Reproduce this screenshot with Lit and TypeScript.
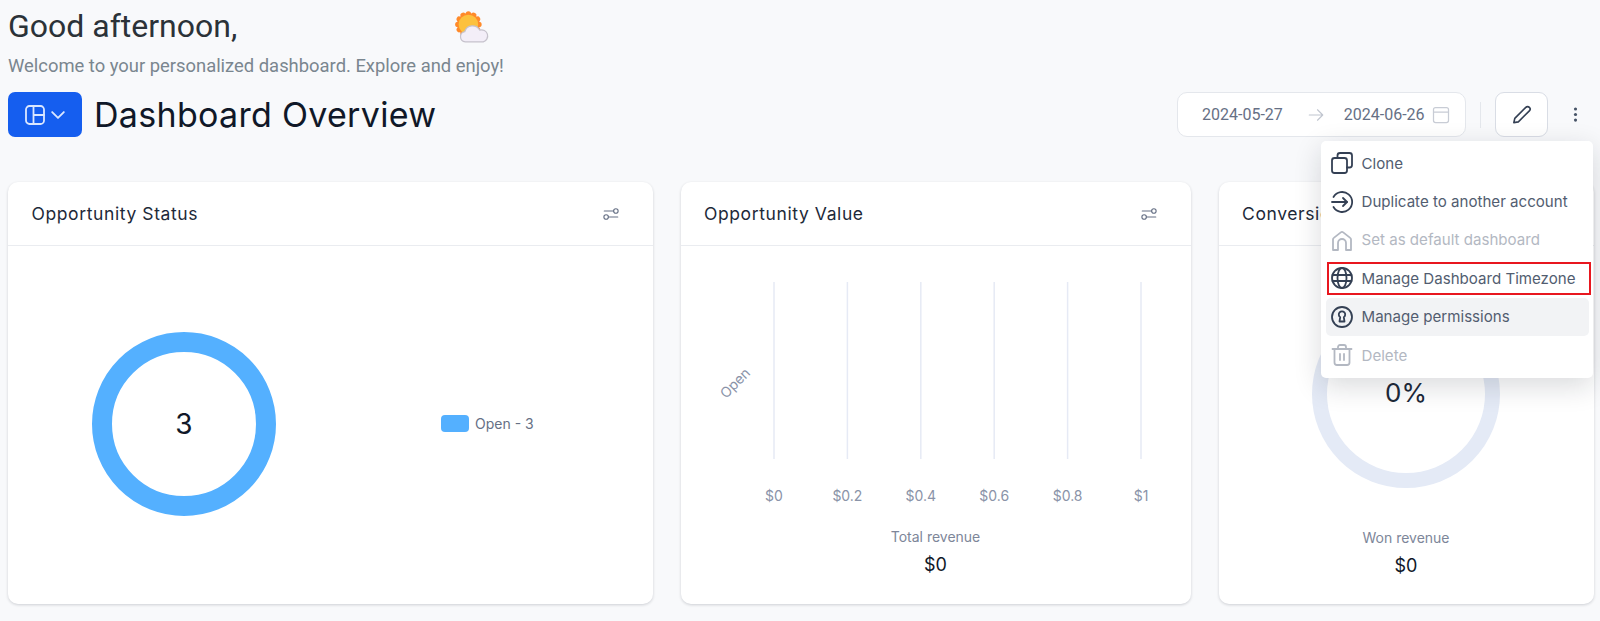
import { LitElement, html, css, svg } from 'lit';
import { customElement } from 'lit/decorators.js';

const icon = (body: unknown, cls = '') => html`
  <svg class=${cls} viewBox="0 0 24 24" fill="none" stroke="currentColor" stroke-width="2" stroke-linecap="round" stroke-linejoin="round">${body}</svg>
`;

const menuItems = [
  {
    label: 'Clone',
    icon: svg`<path d="M7.500 7V4.500A2.500 2.500 0 0 1 10 2h9.500A2.500 2.500 0 0 1 22 4.500V14a2.500 2.500 0 0 1-2.500 2.500H17"/><rect x="2" y="7" width="15" height="15" rx="2.500"/>`,
  },
  {
    label: 'Duplicate to another account',
    icon: svg`<path d="M3.500 7A10 10 0 1 1 3.500 17"/><path d="M2 12h15"/><path d="M13 8l4 4-4 4"/>`,
  },
  {
    label: 'Set as default dashboard',
    disabled: true,
    icon: svg`<path d="M3 22v-10.500a2 2 0 0 1 .8-1.600l7-5.500a2 2 0 0 1 2.400 0l7 5.500a2 2 0 0 1 .8 1.600V22h-5v-7a4 4 0 0 0-8 0v7z"/>`,
  },
  {
    label: 'Manage Dashboard Timezone',
    outlined: true,
    icon: svg`<circle cx="12" cy="12" r="10"/><path d="M2.500 9h19M2.500 15h19"/><ellipse cx="12" cy="12" rx="4.500" ry="10"/>`,
  },
  {
    label: 'Manage permissions',
    hover: true,
    icon: svg`<circle cx="12" cy="12" r="10"/><path d="M9.500 16.500h5l-.7-4.300a3.200 3.200 0 1 0-3.600 0z"/>`,
  },
  {
    label: 'Delete',
    disabled: true,
    icon: svg`<path d="M2.500 6h19M8 6V4a2 2 0 0 1 2-2h4a2 2 0 0 1 2 2v2"/><path d="M4.500 6v13.500A2.500 2.500 0 0 0 7 22h10a2.500 2.500 0 0 0 2.500-2.500V6"/><path d="M10 11v6M14 11v6"/>`,
  },
];

const ticks = ['$0', '$0.2', '$0.4', '$0.6', '$0.8', '$1'];
const sliders = svg`<path d="M3 8h12.500M21 16H8.500"/><circle cx="18.500" cy="8" r="3"/><circle cx="5.500" cy="16" r="3"/>`;

@customElement('app-root')
export class AppRoot extends LitElement {
  static styles = css`
    :host {
      display: block;
      height: 621px;
      background: #f8f9fb;
      font-family: 'Inter', 'Roboto', sans-serif;
      color: #101828;
      overflow: hidden;
    }
    svg { display: block; }
    .page { position: relative; padding: 0 8px; }
    .greeting {
      display: flex;
      align-items: center;
      height: 52px;
      font-family: 'Roboto', sans-serif;
      font-size: 32px;
      color: #2b3238;
    }
    .sun { width: 37px; height: 33px; margin-left: 217px; margin-top: 2px; }
    .welcome {
      font-family: 'Roboto', sans-serif;
      font-size: 18.400px;
      line-height: 28px;
      color: #7a868f;
    }
    .title-row {
      display: flex;
      align-items: center;
      height: 45px;
      margin-top: 12px;
    }
    .board-btn {
      display: flex;
      align-items: center;
      justify-content: center;
      gap: 1px;
      width: 74px;
      height: 45px;
      border-radius: 7px;
      background: #155eef;
      color: #dbe7ff;
    }
    .board-btn svg { width: 24px; height: 24px; stroke-width: 1.800; }
    .board-btn svg.chev { width: 20px; height: 20px; stroke-width: 2.200; }
    h1 {
      margin: 0 0 0 12px;
      font-size: 34px;
      font-weight: 400;
      letter-spacing: 0.3px;
      color: #101828;
    }
    .tools { margin-left: auto; display: flex; align-items: center; }
    .dates {
      display: flex;
      align-items: center;
      width: 289px;
      height: 45px;
      box-sizing: border-box;
      padding: 0 14px 0 24px;
      background: #fff;
      border: 1px solid #e4e7ec;
      border-radius: 10px;
      font-family: 'Roboto', sans-serif;
      font-size: 16px;
      white-space: nowrap;
      color: #667085;
    }
    .dates .arrow { width: 18px; height: 18px; flex: none; margin: 0 19px 0 24px; color: #c0c5cf; stroke-width: 1.500; }
    .dates .cal { width: 20px; height: 20px; flex: none; margin-left: auto; color: #c8ccd5; stroke-width: 1.500; }
    .divider { width: 1px; height: 26px; margin: 0 14px; background: #e4e7ec; }
    .edit {
      display: flex;
      align-items: center;
      justify-content: center;
      width: 53px;
      height: 45px;
      box-sizing: border-box;
      background: #fff;
      border: 1px solid #d9dde5;
      border-radius: 9px;
      color: #344054;
    }
    .edit svg { width: 23px; height: 23px; stroke-width: 1.700; }
    .kebab { width: 19px; height: 19px; margin: 0 7px 0 18px; color: #475467; }

    .cards {
      display: grid;
      grid-template-columns: 644.500px 510px 375px;
      gap: 28px;
      margin-top: 45px;
    }
    .card {
      display: flex;
      flex-direction: column;
      height: 422px;
      background: #fff;
      border-radius: 10px;
      box-shadow: 0 1px 3px rgba(16, 24, 40, 0.18);
    }
    .card-head {
      display: flex;
      align-items: center;
      justify-content: space-between;
      height: 63px;
      flex: none;
      padding: 0 33px 0 23.500px;
      border-bottom: 1px solid #eaecf0;
      font-size: 17.500px;
      letter-spacing: 0.6px;
      color: #1d2939;
    }
    .card-head svg { width: 18px; height: 18px; color: #667085; stroke-width: 1.500; }
    .card-body { flex: 1; display: flex; flex-direction: column; align-items: center; }
    .status-body { flex-direction: row; padding: 0 0 3px 84px; }
    .status-ring { display: grid; place-items: center; width: 184px; height: 184px; }
    .status-ring > * { grid-area: 1 / 1; }
    .status-ring span { font-size: 28px; color: #101828; }
    .legend {
      display: flex;
      align-items: center;
      gap: 6px;
      margin-left: 165px;
      font-size: 14px;
      color: #667085;
    }
    .swatch { width: 28px; height: 17px; border-radius: 4px; background: #54b0ff; }
    .bars { width: 510px; height: 281px; flex: none; }
    .bars text { font-family: 'Inter', sans-serif; font-size: 14px; fill: #8a93a8; }
    .summary { display: flex; flex-direction: column; align-items: center; }
    .summary .label { font-size: 14px; line-height: 20px; color: #7d8699; }
    .summary .value { margin-top: 4.500px; font-size: 18px; line-height: 26px; color: #101828; }
    .won { padding-top: 54px; }
    .won-ring { display: grid; place-items: center; width: 188px; height: 188px; margin-bottom: 40px; }
    .won-ring > * { grid-area: 1 / 1; }
    .won-ring span { padding-bottom: 4px; font-size: 26px; color: #1d2939; }

    .menu {
      position: absolute;
      top: 141px;
      right: 7px;
      width: 272px;
      box-sizing: border-box;
      padding: 3px 4px 4px 5px;
      background: #fff;
      border-radius: 5px;
      box-shadow: 0 8px 28px rgba(16, 24, 40, 0.16);
    }
    .item {
      display: flex;
      align-items: center;
      gap: 7.500px;
      height: 38.400px;
      box-sizing: border-box;
      padding-left: 4px;
      border-radius: 5px;
      font-size: 15.100px;
      color: #525d70;
    }
    .item svg { width: 24px; height: 24px; color: #344054; flex: none; stroke-width: 1.800; }
    .item.disabled { color: #b3b8c2; }
    .item.disabled svg { color: #b3b8c2; }
    .item.hover { background: #f2f3f5; }
    .item.outlined { position: relative; }
    .item.outlined::after {
      content: '';
      position: absolute;
      inset: 3px -2px 3px 1px;
      border: 2px solid #e8171f;
    }
  `;

  private header() {
    return html`
      <div class="greeting">
        Good afternoon,
        <svg class="sun" viewBox="0 0 36 32">
          <g fill="#ff8a2a">
            ${[0, 30, 60, 90, 120, 150, 180, 210, 240, 270, 300, 330].map(
              a => svg`<circle cx="14" cy="13" r="2.600" transform="rotate(${a} 14 13) translate(0 -10.300)"/>`,
            )}
          </g>
          <circle cx="14" cy="13" r="11" fill="#ff8a2a"/>
          <circle cx="14" cy="13" r="9.500" fill="#fcc13d"/>
          <path d="M11 30a5 5 0 0 1-.6-9.900A8 8 0 0 1 25 18.500a5.800 5.800 0 0 1 3.500 11.500z" fill="#f3eef8" stroke="#c6c2cc" stroke-width="1.200"/>
        </svg>
      </div>
      <div class="welcome">Welcome to your personalized dashboard. Explore and enjoy!</div>
      <div class="title-row">
        <div class="board-btn">
          ${icon(svg`<rect x="3" y="3" width="18" height="18" rx="3.500"/><path d="M10.500 3v18M10.500 12H21"/>`)}
          ${icon(svg`<path d="M5 8.500l7 7 7-7"/>`, 'chev')}
        </div>
        <h1>Dashboard Overview</h1>
        <div class="tools">
          <div class="dates">
            <span>2024-05-27</span>
            ${icon(svg`<path d="M3 12h18M14 5l7 7-7 7"/>`, 'arrow')}
            <span>2024-06-26</span>
            ${icon(svg`<rect x="3" y="3" width="18" height="18" rx="2.500"/><path d="M3 8.500h18"/>`, 'cal')}
          </div>
          <div class="divider"></div>
          <div class="edit">
            ${icon(svg`<path d="M4 20.500l1-4.500L16.500 4.500a2.600 2.600 0 0 1 3.700 3.700L8.700 19.700z"/>`)}
          </div>
          <svg class="kebab" viewBox="0 0 24 24" fill="currentColor">
            <circle cx="12" cy="5" r="2"/><circle cx="12" cy="12" r="2"/><circle cx="12" cy="19" r="2"/>
          </svg>
        </div>
      </div>
    `;
  }

  private cardHead(title: string) {
    return html`<div class="card-head"><span>${title}</span>${icon(sliders)}</div>`;
  }

  private barChart() {
    return html`
      <svg class="bars" viewBox="0 0 510 281">
        ${ticks.map((t, i) => {
          const x = 93 + i * 73.400;
          return svg`
            <line x1=${x} x2=${x} y1="36" y2="213" stroke="#e6eaf5" stroke-width="1.500"/>
            <text x=${x} y="255" text-anchor="middle">${t}</text>
          `;
        })}
        <text x="54" y="142" text-anchor="middle" transform="rotate(-45 54 137)">Open</text>
      </svg>
    `;
  }

  render() {
    return html`
      <div class="page">
        ${this.header()}
        <div class="cards">
          <section class="card">
            ${this.cardHead('Opportunity Status')}
            <div class="card-body status-body">
              <div class="status-ring">
                <svg width="184" height="184" viewBox="0 0 184 184">
                  <circle cx="92" cy="92" r="82" fill="none" stroke="#54b0ff" stroke-width="20"/>
                </svg>
                <span>3</span>
              </div>
              <div class="legend"><span class="swatch"></span>Open - 3</div>
            </div>
          </section>
          <section class="card">
            ${this.cardHead('Opportunity Value')}
            <div class="card-body">
              ${this.barChart()}
              <div class="summary">
                <span class="label">Total revenue</span>
                <span class="value">$0</span>
              </div>
            </div>
          </section>
          <section class="card">
            ${this.cardHead('Conversion')}
            <div class="card-body won">
              <div class="won-ring">
                <svg width="188" height="188" viewBox="0 0 188 188">
                  <circle cx="94" cy="94" r="86.500" fill="none" stroke="#e4eaf6" stroke-width="15"/>
                </svg>
                <span>0%</span>
              </div>
              <div class="summary">
                <span class="label">Won revenue</span>
                <span class="value">$0</span>
              </div>
            </div>
          </section>
        </div>
        <div class="menu">
          ${menuItems.map(
            m => html`
              <div class="item ${m.disabled ? 'disabled' : ''} ${m.hover ? 'hover' : ''} ${m.outlined ? 'outlined' : ''}">
                ${icon(m.icon)}<span>${m.label}</span>
              </div>
            `,
          )}
        </div>
      </div>
    `;
  }
}
